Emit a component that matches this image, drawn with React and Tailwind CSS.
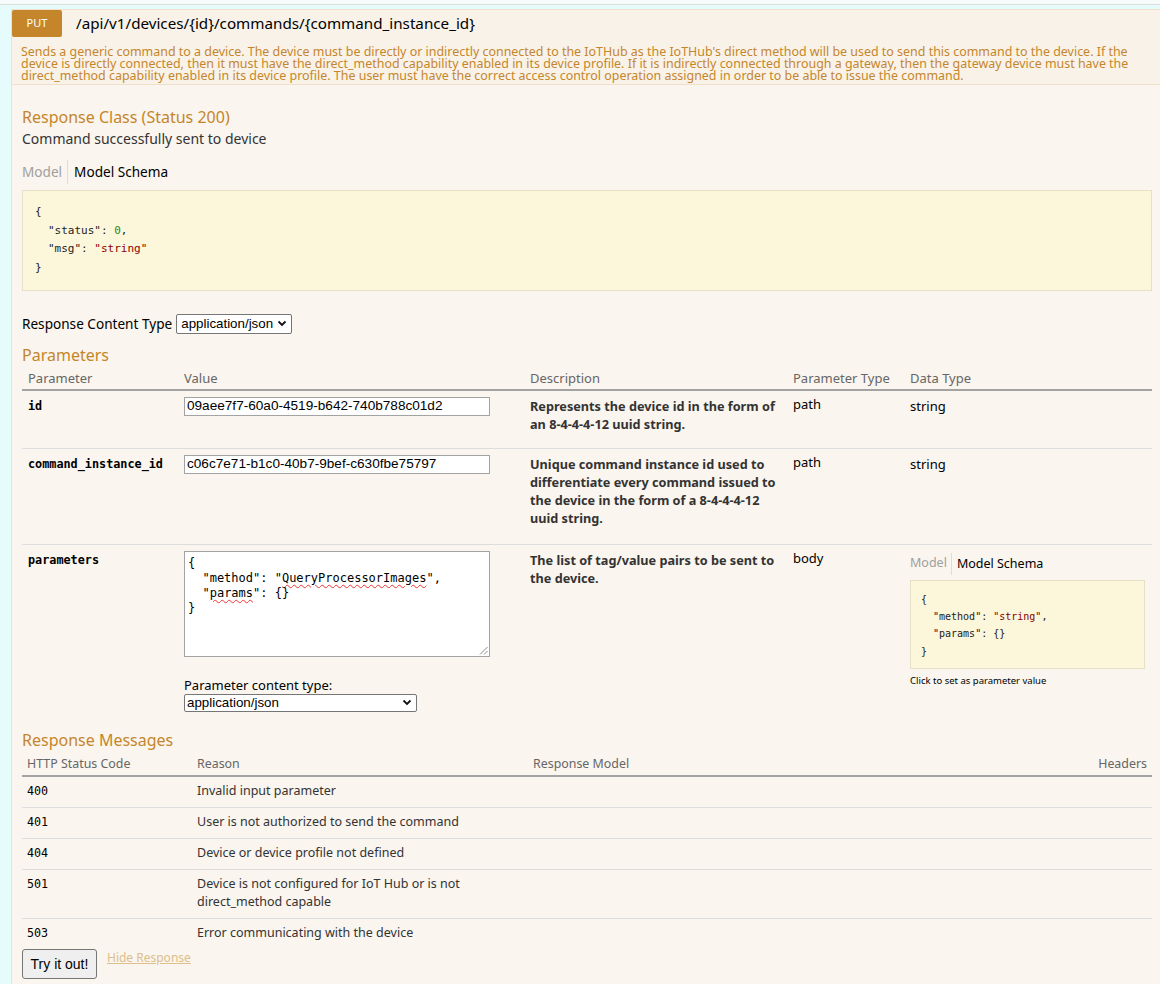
import React from "react";

const mono = "font-['DejaVu_Sans_Mono',monospace]";

function Grip() {
  return (
    <svg width="9" height="9" viewBox="0 0 9 9" className="absolute bottom-[1px] right-[1px]">
      <line x1="8.5" y1="1" x2="1" y2="8.5" stroke="#888" strokeWidth="1" />
      <line x1="8.5" y1="5" x2="5" y2="8.5" stroke="#888" strokeWidth="1" />
    </svg>
  );
}

function FakeSelect({ className, value }) {
  return (
    <div
      role="combobox"
      className={
        "flex items-center justify-between border border-[#767676] rounded-[2px] bg-white text-black font-['Liberation_Sans',Arial,sans-serif] text-[13.33px] leading-[16px] " +
        className
      }
    >
      <span>{value}</span>
      <svg width="10" height="7" viewBox="0 0 10 7" className="shrink-0">
        <path d="M1.5 1.5 L5 5 L8.5 1.5" fill="none" stroke="#111" strokeWidth="1.8" />
      </svg>
    </div>
  );
}

function Squiggle({ children }) {
  return (
    <span className="underline decoration-wavy decoration-[#e33] decoration-1 underline-offset-[2px]">
      {children}
    </span>
  );
}

export default function App() {
  const params = [
    {
      name: "id",
      value: "09aee7f7-60a0-4519-b642-740b788c01d2",
      desc: "Represents the device id in the form of an 8-4-4-4-12 uuid string.",
      ptype: "path",
      pb: "pb-[15px]",
    },
    {
      name: "command_instance_id",
      value: "c06c7e71-b1c0-40b7-9bef-c630fbe75797",
      desc: "Unique command instance id used to differentiate every command issued to the device in the form of a 8-4-4-4-12 uuid string.",
      ptype: "path",
      pb: "pb-[17px]",
    },
  ];
  const messages = [
    ["400", "Invalid input parameter"],
    ["401", "User is not authorized to send the command"],
    ["404", "Device or device profile not defined"],
    ["501", "Device is not configured for IoT Hub or is not direct_method capable"],
    ["503", "Error communicating with the device"],
  ];

  return (
    <div className="min-h-[984px] bg-[#e6fcfc] font-['Noto_Sans',sans-serif] text-[#333]">
      <div className="h-[5px] border-b border-[#dcdcdc] bg-[#f8fbfb]"></div>
      <div className="pt-[4px] pl-[11px]">
        <div className="border-l border-[#f0e0ca] min-h-[975px] bg-[#faf5ee]">
          {/* heading */}
          <div className="bg-[#f9f2e9] border-t border-b border-[#f0e0ca]">
            <div className="flex items-center h-[27px]">
              <span className="w-[50px] h-[27px] bg-[#c5862b] rounded-[2px] text-white text-[11px] flex items-center justify-center">
                PUT
              </span>
              <span className="ml-[14px] text-[15.2px] text-black leading-[27px]">
                /api/v1/devices/{"{id}"}/commands/{"{command_instance_id}"}
              </span>
            </div>
            <p className="px-[9px] pt-[9px] pb-[2px] text-[12.45px] leading-[12px] text-[#c5862b] whitespace-nowrap overflow-hidden">
              Sends a generic command to a device. The device must be directly or indirectly connected to the IoTHub as the IoTHub's direct method will be used to send this command to the device. If the
              <br />
              device is directly connected, then it must have the direct_method capability enabled in its device profile. If it is indirectly connected through a gateway, then the gateway device must have the
              <br />
              direct_method capability enabled in its device profile. The user must have the correct access control operation assigned in order to be able to issue the command.
            </p>
          </div>

          {/* content */}
          <div className="pl-[10px] pr-[8px] pt-[20px]">
            <h4 className="text-[16px] leading-[24px] text-[#c5862b]">Response Class (Status 200)</h4>
            <p className="text-[14px] leading-[20px] text-[#333]">Command successfully sent to device</p>
            <div className="mt-[11px] flex h-[24px] items-center text-[13.6px]">
              <span className="text-[#a0a0a0] pr-[5px] leading-[24px]">Model</span>
              <span className="border-l border-[#ddd] pl-[6px] leading-[24px] text-black">Model Schema</span>
            </div>
            <div className={"mt-[6px] bg-[#fcf6db] border border-[#e5e0c6] px-[12px] py-[12px] text-[11px] leading-[18.67px] text-[#222] " + mono}>
              <div>{"{"}</div>
              <div className="pl-[13px]">
                "status": <span className="text-[#1a8a1a]">0</span>,
              </div>
              <div className="pl-[13px]">
                "msg": <span className="text-[#880000]">"string"</span>
              </div>
              <div>{"}"}</div>
            </div>

            <div className="mt-[23px] flex items-center h-[20px] text-[13.6px] text-black">
              <span className="mr-[4px]">Response Content Type</span>
              <FakeSelect value="application/json" className="h-[20px] w-[116px] pl-[4px] pr-[4px]" />
            </div>

            <h4 className="mt-[9px] text-[16px] leading-[24px] text-[#c5862b]">Parameters</h4>
            <table className="w-full table-fixed border-collapse">
              <colgroup>
                <col className="w-[156px]" />
                <col className="w-[346px]" />
                <col className="w-[263px]" />
                <col className="w-[117px]" />
                <col />
              </colgroup>
              <thead>
                <tr className="border-b-2 border-[#a3a3a3] text-[13px] leading-[18px] text-[#666] text-left">
                  <th className="font-normal px-[6px] pt-[2px] pb-[2px]">Parameter</th>
                  <th className="font-normal px-[6px] pt-[2px] pb-[2px]">Value</th>
                  <th className="font-normal px-[6px] pt-[2px] pb-[2px]">Description</th>
                  <th className="font-normal px-[6px] pt-[2px] pb-[2px]">Parameter Type</th>
                  <th className="font-normal px-[6px] pt-[2px] pb-[2px]">Data Type</th>
                </tr>
              </thead>
              <tbody>
                {params.map((p) => (
                  <tr key={p.name} className="border-b border-[#ddd] align-top">
                    <td className={"px-[6px] pt-[6px] text-[11.8px] leading-[18px] font-bold text-black " + p.pb + " " + mono}>
                      {p.name}
                    </td>
                    <td className={"px-[6px] pt-[6px] " + p.pb}>
                      <input
                        readOnly
                        defaultValue={p.value}
                        className="block w-[306px] h-[19px] border border-[#a3a3a3] bg-white px-[2px] text-[13.6px] text-black font-['Liberation_Sans',Arial,sans-serif]"
                      />
                    </td>
                    <td className={"px-[6px] pt-[6px] text-[12.7px] leading-[18px] font-bold text-[#333] " + p.pb}>
                      {p.desc}
                    </td>
                    <td className={"px-[6px] pt-[4px] text-[13px] leading-[18px] text-black " + p.pb}>{p.ptype}</td>
                    <td className={"px-[6px] pt-[6px] text-[13px] leading-[18px] text-black " + p.pb}>string</td>
                  </tr>
                ))}
                <tr className="align-top">
                  <td className={"px-[6px] pt-[6px] pb-[16px] text-[11.8px] leading-[18px] font-bold text-black " + mono}>
                    parameters
                  </td>
                  <td className="px-[6px] pt-[6px] pb-[16px]">
                    <div className={"relative w-[306px] h-[106px] border border-[#a3a3a3] bg-white px-[3px] pt-[4px] text-[12px] leading-[15px] text-black whitespace-pre " + mono}>
                      <div>{"{"}</div>
                      <div>
                        {'  "method": "'}
                        <Squiggle>QueryProcessorImages</Squiggle>
                        {'",'}
                      </div>
                      <div>
                        {'  "'}
                        <Squiggle>params</Squiggle>
                        {'": {}'}
                      </div>
                      <div>{"}"}</div>
                      <Grip />
                    </div>
                    <div className="mt-[19px] text-[13px] leading-[18px] text-black">Parameter content type:</div>
                    <FakeSelect value="application/json" className="h-[18px] w-[233px] pl-[2px] pr-[4px]" />
                  </td>
                  <td className="px-[6px] pt-[6px] pb-[16px] text-[12.7px] leading-[18px] font-bold text-[#333]">
                    The list of tag/value pairs to be sent to the device.
                  </td>
                  <td className="px-[6px] pt-[4px] pb-[16px] text-[13px] leading-[18px] text-black">body</td>
                  <td className="px-[6px] pt-[8px] pb-[16px]">
                    <div className="flex items-center h-[22px] text-[12.5px]">
                      <span className="text-[#a0a0a0] pr-[4px]">Model</span>
                      <span className="border-l border-[#ddd] pl-[5px] text-black leading-[22px]">Model Schema</span>
                    </div>
                    <div className={"mt-[5px] w-[235px] bg-[#fcf6db] border border-[#e5e0c6] pl-[10px] pt-[10px] pb-[8px] text-[10px] leading-[17.3px] text-[#222] " + mono}>
                      <div>{"{"}</div>
                      <div className="pl-[12px]">
                        "method": <span className="text-[#880000]">"string"</span>,
                      </div>
                      <div className="pl-[12px]">"params": {"{}"}</div>
                      <div>{"}"}</div>
                    </div>
                    <div className="mt-[5px] text-[9.5px] leading-[14px] text-black">Click to set as parameter value</div>
                  </td>
                </tr>
              </tbody>
            </table>

            <h4 className="text-[16px] leading-[24px] text-[#c5862b]">Response Messages</h4>
            <table className="w-full table-fixed border-collapse">
              <colgroup>
                <col className="w-[169px]" />
                <col className="w-[336px]" />
                <col />
                <col className="w-[61px]" />
              </colgroup>
              <thead>
                <tr className="border-b-2 border-[#a3a3a3] text-[12.4px] leading-[18px] text-[#666] text-left">
                  <th className="font-normal px-[5px] pt-[3px] pb-[2px]">HTTP Status Code</th>
                  <th className="font-normal px-[6px] pt-[3px] pb-[2px]">Reason</th>
                  <th className="font-normal px-[6px] pt-[3px] pb-[2px]">Response Model</th>
                  <th className="font-normal px-[5px] pt-[3px] pb-[2px] text-right">Headers</th>
                </tr>
              </thead>
              <tbody>
                {messages.map(([code, reason], i) => (
                  <tr key={code} className={"align-top " + (i < messages.length - 1 ? "border-b border-[#ddd]" : "")}>
                    <td className={"px-[5px] pt-[5px] pb-[7px] text-[11.7px] leading-[18px] text-black " + mono}>{code}</td>
                    <td className="px-[6px] pt-[5px] pb-[7px] text-[12.5px] leading-[18px] text-[#333]">{reason}</td>
                    <td className="px-[6px]"></td>
                    <td className="px-[6px]"></td>
                  </tr>
                ))}
              </tbody>
            </table>
            <div className="flex items-start">
              <button className="w-[75px] h-[30px] border border-[#767676] rounded-[3px] bg-[#efefef] text-[14px] leading-[16px] text-black font-['Liberation_Sans',Arial,sans-serif]">
                Try it out!
              </button>
              <a className="ml-[10px] mt-[1px] text-[12px] leading-[16px] text-[#dcbf8b] underline">Hide Response</a>
            </div>
          </div>
        </div>
      </div>
    </div>
  );
}
